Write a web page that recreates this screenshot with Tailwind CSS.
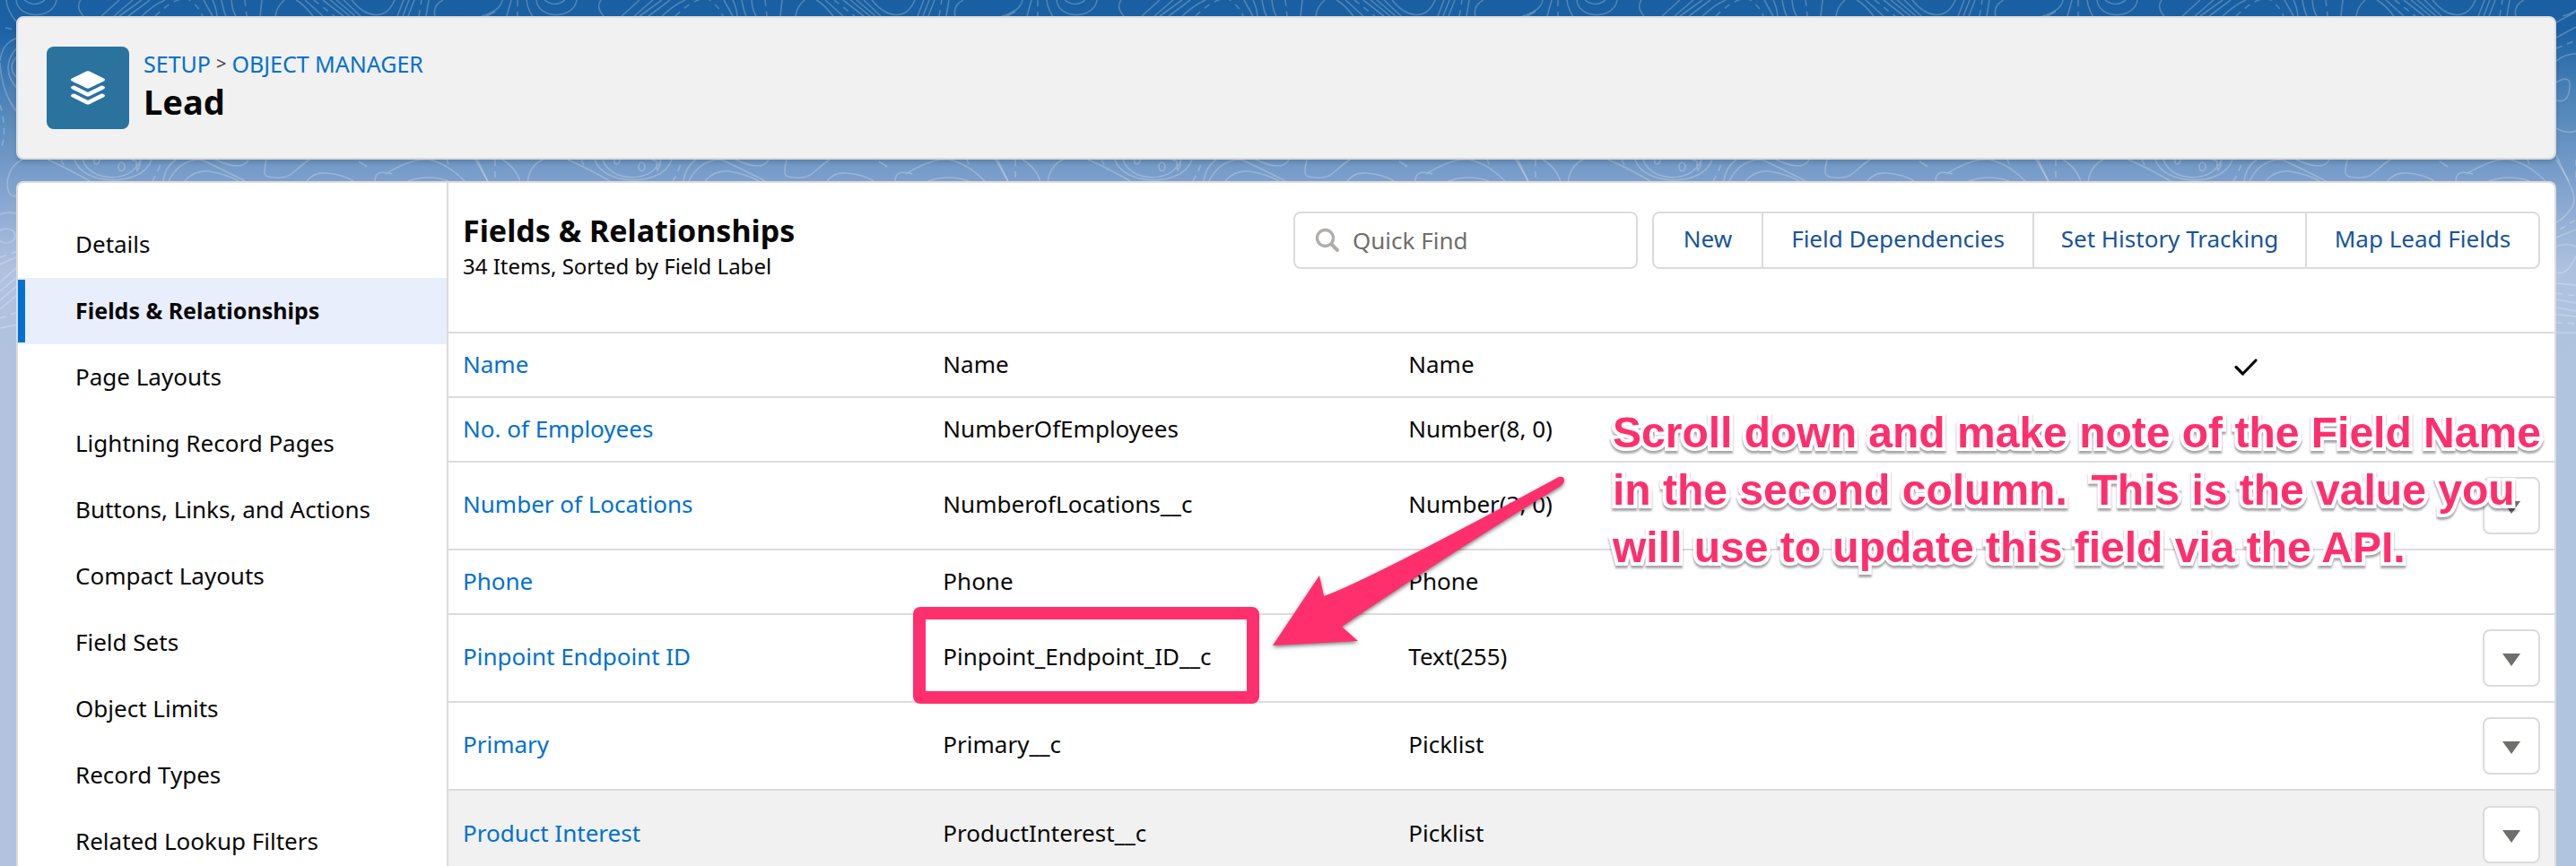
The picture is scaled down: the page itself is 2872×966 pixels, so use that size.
<!DOCTYPE html>
<html lang="en">
<head>
<meta charset="utf-8">
<meta name="viewport" content="width=device-width, initial-scale=1">
<title>Lead | Object Manager</title>
<script src="https://cdn.jsdelivr.net/npm/@tailwindcss/browser@4"></script>
</head>
<body class="relative flex h-screen flex-col overflow-hidden bg-[#b0c4df] pt-[18px] pr-[22px] pl-[18px] font-['Noto_Sans',sans-serif] text-[26px] leading-9 text-[#080707]">

<!-- Brand band: gradient and contour lines -->
<svg class="absolute top-0 left-0 h-[400px] w-full" aria-hidden="true">
  <defs>
    <linearGradient id="band" x1="0" y1="0" x2="0" y2="1">
      <stop offset="0" stop-color="#195fa1"/>
      <stop offset="0.08" stop-color="#1b61a3"/>
      <stop offset="0.25" stop-color="#4880b5"/>
      <stop offset="0.5" stop-color="#7c9fcb"/>
      <stop offset="0.75" stop-color="#aec2e0"/>
      <stop offset="1" stop-color="#b0c4df"/>
    </linearGradient>
    <pattern id="topo" width="580" height="400" patternUnits="userSpaceOnUse">
      <g fill="none" stroke="#fff" stroke-opacity="0.23" stroke-width="1.6">
        <path d="M7 0Q8 12 18 24M18 0C20 22 60 22 63 0M27 0Q38 9 50 0M90 0Q84 8 93 18M113 18L133 0M127 18L148 0M133 18L158 0M143 18L167 0M158 18Q172 5 184 0M227 0L237 18M237 0Q241 8 242 18M247 0Q249 12 252 18M258 0Q259 12 263 18M292 0L290 18M317 0Q308 8 307 18M330 0Q338 4 349 18M340 0L360 18M360 0L383 18M368 0L390 18M375 0L396 18M383 0L402 18M392 0C408 20 430 24 440 0M443 18L450 0M449 18L456 0M455 18L462 0M475 18L478 0M485 18Q482 6 494 0M537 18Q558 12 560 0M565 18L570 0"/>
        <path stroke-dasharray="7 6" d="M6 31L16 33M173 18Q200 -8 213 1Q222 8 226 18M273 0L275 18M350 0L373 18M467 18L470 0M577 0V18M0 117C6 135 6 160 0 166M170 202Q176 192 180 180M552 178V202M530 54L552 45M534 256L552 245M0 287L20 280M0 355L20 348M530 327L552 330M530 360L552 361M68 178L74 190"/>
        <path d="M20 42Q2 48 0 68M20 52Q-2 75 20 100M20 62Q6 75 20 88M0 70Q2 105 20 126M0 239Q10 235 20 239M0 295L20 286M0 315L20 297M0 325L20 308M0 335L20 318M0 345L20 328M0 366L20 362"/>
        <ellipse cx="7" cy="263" rx="10" ry="8"/>
        <path d="M25 178C8 186 6 205 10 215Q12 219 20 219M53 178Q76 188 100 202M83 178C92 207 158 210 169 178M92 178C100 203 146 206 157 178M105 178Q104 183 108 183Q111 182 111 178M147 178L152 180Q152 188 153 190Q158 182 156 178M182 202Q184 186 196 178M188 202Q200 178 224 178Q246 188 273 202M206 202Q216 190 232 191Q252 194 266 202M240 178Q270 192 277 178M297 178C294 192 292 198 306 198C326 200 326 190 345 178M342 202Q350 192 364 193Q384 195 394 202M400 180L409 186M418 202Q418 188 437 194M430 194Q460 176 478 178Q498 182 518 202M455 202Q478 194 500 202M498 178L500 183M530 178L544 202M560 178Q574 186 580 202"/>
        <ellipse cx="135.500" cy="186" rx="3.500" ry="4.800"/>
        <path d="M530 25L552 13M530 42L552 30M530 68Q540 60 552 60M530 92C544 83 546 92 545 97C544 112 538 114 530 112M530 143Q542 150 552 146M530 173L547 210Q554 226 544 236Q538 244 530 248M530 265L552 256M530 275Q540 270 552 275M552 286Q542 308 530 304M530 316L552 318M530 334L552 338M530 343L552 347M530 351L552 353M530 371H552"/>
      </g>
    </pattern>
  </defs>
  <rect width="100%" height="400" fill="url(#band)"/>
  <rect width="100%" height="400" fill="url(#topo)"/>
</svg>

<header class="relative flex shrink-0 gap-4 rounded-lg border-2 border-[#dddbda] bg-[#f1f1f1] px-8 pt-8 pb-8 shadow-[0_4px_4px_rgba(0,0,0,0.12)]">
  <div class="size-[92px] shrink-0 rounded-lg bg-[#2a739e]">
    <svg class="size-full" viewBox="0 0 92 92" fill="#fff" aria-hidden="true">
      <path d="M44.300 27.600Q46 26.800 47.700 27.600L64.300 35.800Q66 37 64.300 38.200L47.700 46.300Q46 47.100 44.300 46.300L27.700 38.200Q26 37 27.700 35.800Z"/>
      <path d="M27.700 44.600L29.500 43.700Q30.500 43.300 31.500 43.700L46 51L60.500 43.700Q61.500 43.300 62.500 43.700L64.300 44.600Q65.800 45.700 64.300 46.900L47.700 55.200Q46 56 44.300 55.200L27.700 46.900Q26.200 45.700 27.700 44.600Z"/>
      <path d="M27.700 53.600L29.500 52.700Q30.500 52.300 31.500 52.700L46 60L60.500 52.700Q61.500 52.300 62.500 52.700L64.300 53.600Q65.800 54.700 64.300 55.900L47.700 64.200Q46 65 44.300 64.200L27.700 55.900Q26.200 54.700 27.700 53.600Z"/>
    </svg>
  </div>
  <div>
    <nav aria-label="Breadcrumb" class="flex gap-1.5 text-[25px] leading-[38px] text-[#0070d2]">
      <a href="#">SETUP</a><span class="text-xl leading-[38px] text-[#3e3e3c]">&gt;</span><a href="#">OBJECT MANAGER</a>
    </nav>
    <h1 class="text-[38px] leading-[46px] font-bold">Lead</h1>
  </div>
</header>

<div class="relative mt-6 flex grow rounded-t-lg border-2 border-b-0 border-[#dddbda] bg-white">
  <nav aria-label="Lead setup" class="flex w-[480px] shrink-0 flex-col border-r-2 border-[#dddbda] pt-8 leading-[72px]">
    <a href="#" class="px-16 pb-0.5">Details</a>
    <a href="#" aria-current="page" class="relative bg-[#e8eefb] px-16 pb-0.5 text-[25px] font-bold before:absolute before:inset-y-0.5 before:left-0 before:w-2 before:bg-[#0070d2]">Fields &amp; Relationships</a>
    <a href="#" class="px-16 pb-0.5">Page Layouts</a>
    <a href="#" class="px-16 pb-0.5">Lightning Record Pages</a>
    <a href="#" class="px-16 pb-0.5">Buttons, Links, and Actions</a>
    <a href="#" class="px-16 pb-0.5">Compact Layouts</a>
    <a href="#" class="px-16 pb-0.5">Field Sets</a>
    <a href="#" class="px-16 pb-0.5">Object Limits</a>
    <a href="#" class="px-16 pb-0.5">Record Types</a>
    <a href="#" class="px-16 pb-0.5">Related Lookup Filters</a>
  </nav>

  <main class="relative min-w-0 grow">
    <div class="flex items-start px-4 pt-8 pb-[54px]">
      <div class="grow">
        <h2 class="text-[34px] leading-[42px] font-bold">Fields &amp; Relationships</h2>
        <p class="text-2xl leading-[38px]">34 Items, Sorted by Field Label</p>
      </div>
      <label class="flex h-16 w-[384px] items-center gap-3.5 rounded-lg border-2 border-[#dddbda] bg-white px-[22px]">
        <svg class="size-7 shrink-0" viewBox="0 0 28 28" fill="none" stroke="#b0adab" stroke-width="3.400" aria-hidden="true"><circle cx="11.500" cy="11.500" r="9"/><path stroke-linecap="round" stroke-width="4" d="M19 19L25 25"/></svg>
        <input type="search" aria-label="Quick Find" placeholder="Quick Find" class="min-w-0 grow outline-none placeholder:text-[#706e6b]">
      </label>
      <div class="ml-4 flex h-16 divide-x-2 divide-[#dddbda] rounded-lg border-2 border-[#dddbda] bg-white text-[#16549c]">
        <button class="w-[122px] pb-1">New</button>
        <button class="w-[302px] pb-1">Field Dependencies</button>
        <button class="w-[304px] pb-1">Set History Tracking</button>
        <button class="w-[258px] pb-1">Map Lead Fields</button>
      </div>
    </div>

    <table class="w-full table-fixed text-left">
      <colgroup>
        <col class="w-[22.8%]"><col class="w-[22.1%]"><col class="w-[22%]"><col class="w-[17%]"><col class="w-[11%]"><col>
      </colgroup>
      <tbody>
        <tr class="h-[72px] border-t-2 border-[#dddbda]">
          <td class="px-4 pb-0.5"><a href="#" class="text-[#0070d2]">Name</a></td><td class="px-4 pb-0.5">Name</td><td class="px-4 pb-0.5">Name</td><td></td>
          <td class="px-[18px]"><svg class="size-8" viewBox="0 0 32 32" fill="none" stroke="#080707" stroke-width="3.200" stroke-linecap="round" stroke-linejoin="round" role="img" aria-label="Indexed"><path d="M5 18.500L12.500 26L27 11"/></svg></td><td></td>
        </tr>
        <tr class="h-[72px] border-t-2 border-[#dddbda]">
          <td class="px-4 pb-0.5"><a href="#" class="text-[#0070d2]">No. of Employees</a></td><td class="px-4 pb-0.5">NumberOfEmployees</td><td class="px-4 pb-0.5">Number(8, 0)</td><td></td><td></td><td></td>
        </tr>
        <tr class="h-[98px] border-t-2 border-[#dddbda]">
          <td class="px-4 pb-1"><a href="#" class="text-[#0070d2]">Number of Locations</a></td><td class="px-4 pb-1">NumberofLocations__c</td><td class="px-4 pb-1">Number(3, 0)</td><td></td><td></td>
          <td class="px-4"><button aria-label="Actions for Number of Locations" class="ml-auto flex size-16 items-center justify-center rounded-lg border-2 border-[#dddbda] bg-white pt-1"><svg class="h-3.5 w-5" viewBox="0 0 20 14" fill="#706e6b" aria-hidden="true"><path d="M0 0H20L10 14Z"/></svg></button></td>
        </tr>
        <tr class="h-[72px] border-t-2 border-[#dddbda]">
          <td class="px-4 pb-0.5"><a href="#" class="text-[#0070d2]">Phone</a></td><td class="px-4 pb-0.5">Phone</td><td class="px-4 pb-0.5">Phone</td><td></td><td></td><td></td>
        </tr>
        <tr class="h-[98px] border-t-2 border-[#dddbda]">
          <td class="px-4 pb-1"><a href="#" class="text-[#0070d2]">Pinpoint Endpoint ID</a></td><td class="px-4 pb-1">Pinpoint_Endpoint_ID__c</td><td class="px-4 pb-1">Text(255)</td><td></td><td></td>
          <td class="px-4"><button aria-label="Actions for Pinpoint Endpoint ID" class="ml-auto flex size-16 items-center justify-center rounded-lg border-2 border-[#dddbda] bg-white pt-1"><svg class="h-3.5 w-5" viewBox="0 0 20 14" fill="#706e6b" aria-hidden="true"><path d="M0 0H20L10 14Z"/></svg></button></td>
        </tr>
        <tr class="h-[98px] border-t-2 border-[#dddbda]">
          <td class="px-4 pb-1"><a href="#" class="text-[#0070d2]">Primary</a></td><td class="px-4 pb-1">Primary__c</td><td class="px-4 pb-1">Picklist</td><td></td><td></td>
          <td class="px-4"><button aria-label="Actions for Primary" class="ml-auto flex size-16 items-center justify-center rounded-lg border-2 border-[#dddbda] bg-white pt-1"><svg class="h-3.5 w-5" viewBox="0 0 20 14" fill="#706e6b" aria-hidden="true"><path d="M0 0H20L10 14Z"/></svg></button></td>
        </tr>
        <tr class="h-[98px] border-t-2 border-[#dddbda] bg-[#f1f1f1]">
          <td class="px-4 pb-1"><a href="#" class="text-[#0070d2]">Product Interest</a></td><td class="px-4 pb-1">ProductInterest__c</td><td class="px-4 pb-1">Picklist</td><td></td><td></td>
          <td class="px-4"><button aria-label="Actions for Product Interest" class="ml-auto flex size-16 items-center justify-center rounded-lg border-2 border-[#dddbda] bg-white pt-1"><svg class="h-3.5 w-5" viewBox="0 0 20 14" fill="#706e6b" aria-hidden="true"><path d="M0 0H20L10 14Z"/></svg></button></td>
        </tr>
      </tbody>
    </table>

    <!-- Annotations laid over the table -->
    <div class="pointer-events-none absolute top-[473px] left-[518px] h-[108px] w-[386px] rounded-lg border-[14px] border-[#ff2f6d]"></div>
    <svg class="pointer-events-none absolute top-[316px] left-[910px] h-[220px] w-[350px] drop-shadow-[0_2px_2px_rgba(0,0,0,0.5)]" viewBox="0 0 350 220" fill="#ff2f6d" aria-hidden="true">
      <path d="M9 200L61 122L66 145Q118 126 328 12Q334 11 334 16Q334 18 330 22Q202 100 86 179L104 195Z"/>
    </svg>
    <p class="pointer-events-none absolute top-[247px] left-[1298px] font-['Liberation_Sans',Arial,sans-serif] text-[48px] leading-[64px] font-bold whitespace-pre text-[#ff2f6d] drop-shadow-[0_3px_1px_rgba(0,0,0,0.35)] [-webkit-text-stroke:8px_white] [paint-order:stroke_fill]">Scroll down and make note of the Field Name
in the second column.  This is the value you
will use to update this field via the API.</p>
  </main>
</div>
</body>
</html>
